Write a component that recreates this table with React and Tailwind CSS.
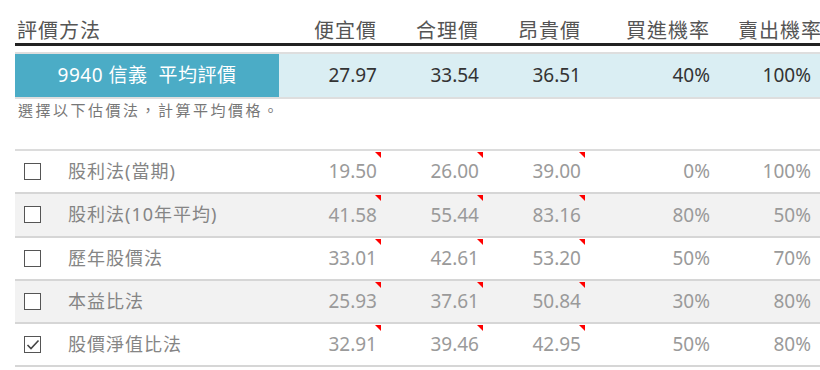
import React from 'react';

const cols = 'grid grid-cols-[264px_102px_102px_102px_129px_101px]';

const rows = [
  { name: '股利法(當期)', cheap: '19.50', fair: '26.00', high: '39.00', buy: '0%', sell: '100%', checked: false },
  { name: '股利法(10年平均)', cheap: '41.58', fair: '55.44', high: '83.16', buy: '80%', sell: '50%', checked: false },
  { name: '歷年股價法', cheap: '33.01', fair: '42.61', high: '53.20', buy: '50%', sell: '70%', checked: false },
  { name: '本益比法', cheap: '25.93', fair: '37.61', high: '50.84', buy: '30%', sell: '80%', checked: false },
  { name: '股價淨值比法', cheap: '32.91', fair: '39.46', high: '42.95', buy: '50%', sell: '80%', checked: true },
];

function Flag() {
  // Excel style comment marker in the top-right corner
  return (
    <span className="absolute top-[1px] right-0 w-0 h-0 border-t-[6px] border-l-[6px] border-t-[#ff0000] border-l-transparent" />
  );
}

function Checkbox({ checked }) {
  return (
    <span className="w-[17px] h-[17px] border-[1.5px] border-[#555] bg-white flex items-center justify-center">
      {checked && (
        <svg width="14" height="14" viewBox="0 0 14 14" fill="none">
          <path d="M1.5 7 L5 10.5 L12.5 2.5" stroke="#444" strokeWidth="1.6" />
        </svg>
      )}
    </span>
  );
}

export default function App() {
  return (
    <div
      className="w-[820px] h-[370px] overflow-hidden bg-white"
      style={{ fontFamily: '"Noto Sans", "Noto Sans CJK TC", sans-serif' }}
    >
      <div className="ml-[15px] w-[815px]">
        {/* Header */}
        <div className={`${cols} h-[43px] items-end text-[20px] leading-[24px] tracking-[1px] text-[#555]`}>
          <div className="pl-[2px]">評價方法</div>
          <div className="text-right pr-[4px]">便宜價</div>
          <div className="text-right pr-[4px]">合理價</div>
          <div className="text-right pr-[4px]">昂貴價</div>
          <div className="text-right pr-[4px]">買進機率</div>
          <div className="whitespace-nowrap pl-[24px]">賣出機率</div>
        </div>
        <div className="h-[3px] bg-[#222]" />

        {/* Average row */}
        <div className={`${cols} mt-[6px] h-[47px] border-y-2 border-[#dedede] bg-[#daeef3] items-center text-[19px] text-[#333]`}>
          <div className="h-full bg-[#4bacc6] text-white flex items-center justify-center tracking-[0.5px]">
            9940 信義&nbsp;&nbsp;平均評價
          </div>
          <div className="text-right pr-[4px]">27.97</div>
          <div className="text-right pr-[4px]">33.54</div>
          <div className="text-right pr-[4px]">36.51</div>
          <div className="text-right pr-[4px]">40%</div>
          <div className="text-right pr-[4px]">100%</div>
        </div>

        <div className="mt-[1px] pl-[3px] text-[15px] leading-[20px] tracking-[2.5px] text-[#777]">
          選擇以下估價法，計算平均價格。
        </div>
        <div className="h-[29px]" />

        {/* Method rows */}
        <div className="border-t-2 border-[#dcdcdc]">
          {rows.map((r, i) => (
            <div
              key={r.name}
              className={`${cols} h-[43.25px] border-b-2 border-[#d6d6d6] items-center text-[19px] ${i % 2 === 1 ? 'bg-[#f2f2f2]' : 'bg-white'}`}
            >
              <div className="flex items-center pl-[9px] text-[18px] text-[#858585] tracking-[1px]">
                <Checkbox checked={r.checked} />
                <span className="ml-[27px]">{r.name}</span>
              </div>
              <div className="relative h-full flex items-center justify-end pr-[4px] text-[#9a9a9a]">
                <Flag />
                {r.cheap}
              </div>
              <div className="relative h-full flex items-center justify-end pr-[4px] text-[#9a9a9a]">
                <Flag />
                {r.fair}
              </div>
              <div className="relative h-full flex items-center justify-end pr-[4px] text-[#9a9a9a]">
                <Flag />
                {r.high}
              </div>
              <div className="text-right pr-[4px] text-[#9a9a9a]">{r.buy}</div>
              <div className="text-right pr-[4px] text-[#9a9a9a]">{r.sell}</div>
            </div>
          ))}
        </div>
      </div>
    </div>
  );
}
